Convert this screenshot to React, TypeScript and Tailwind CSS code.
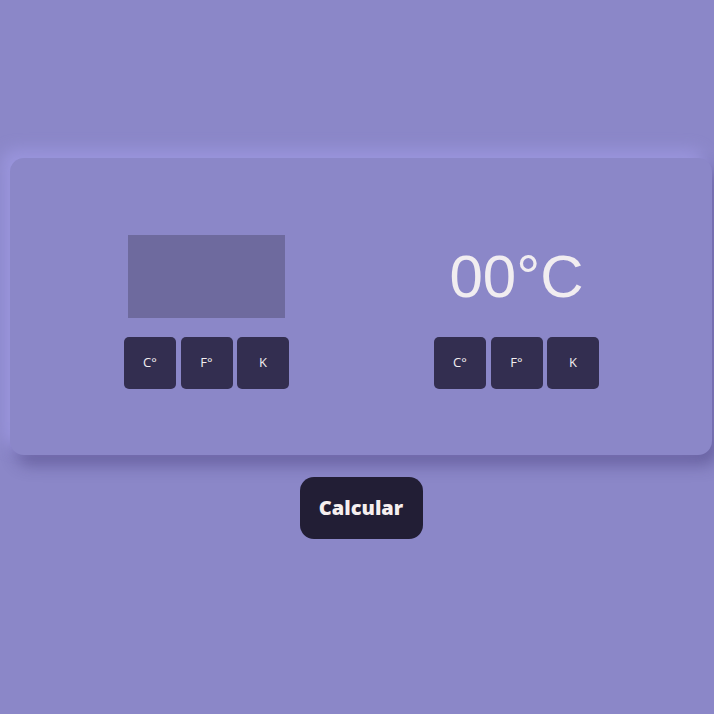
import React from "react";

const units = ["C°", "F°", "K"];

const UnitButtons = () => (
  <div className="flex gap-[4.5px]">
    {units.map((u) => (
      <button
        key={u}
        className="w-[52px] h-[52px] rounded-[5px] bg-[#332e50] text-[#f3eef0] text-[13px] font-medium flex items-center justify-center"
      >
        {u}
      </button>
    ))}
  </div>
);

export default function App() {
  return (
    <div
      className="min-h-[714px] w-[714px] bg-[#8b87c8] overflow-hidden pt-[158px]"
      style={{ fontFamily: '"Open Sans", "Liberation Sans", sans-serif' }}
    >
      <div className="ml-[10px] w-[702px] flex flex-col items-center">
        {/* card */}
        <div className="w-full h-[297px] rounded-[14px] bg-[#8b87c8] shadow-[-8px_-8px_16px_#9b96de,6px_10px_16px_rgba(40,30,90,0.35)] flex items-end justify-between pl-[114px] pr-[113px] pb-[66px]">
          <div className="flex flex-col items-center gap-[19px]">
            <input className="w-[157px] h-[83px] bg-[#6e6a9e] outline-none border-none" />
            <UnitButtons />
          </div>
          <div className="flex flex-col items-center gap-[30px]">
            <span
              className="text-[60px] leading-none text-[#f1edf0]"
              style={{ fontFamily: '"Liberation Sans", Arial, sans-serif' }}
            >
              00°C
            </span>
            <UnitButtons />
          </div>
        </div>

        <button className="mt-[22px] w-[123px] h-[62px] rounded-[14px] bg-[#221e35] text-[#f6efef] text-[20px] font-extrabold">
          Calcular
        </button>
      </div>
    </div>
  );
}
